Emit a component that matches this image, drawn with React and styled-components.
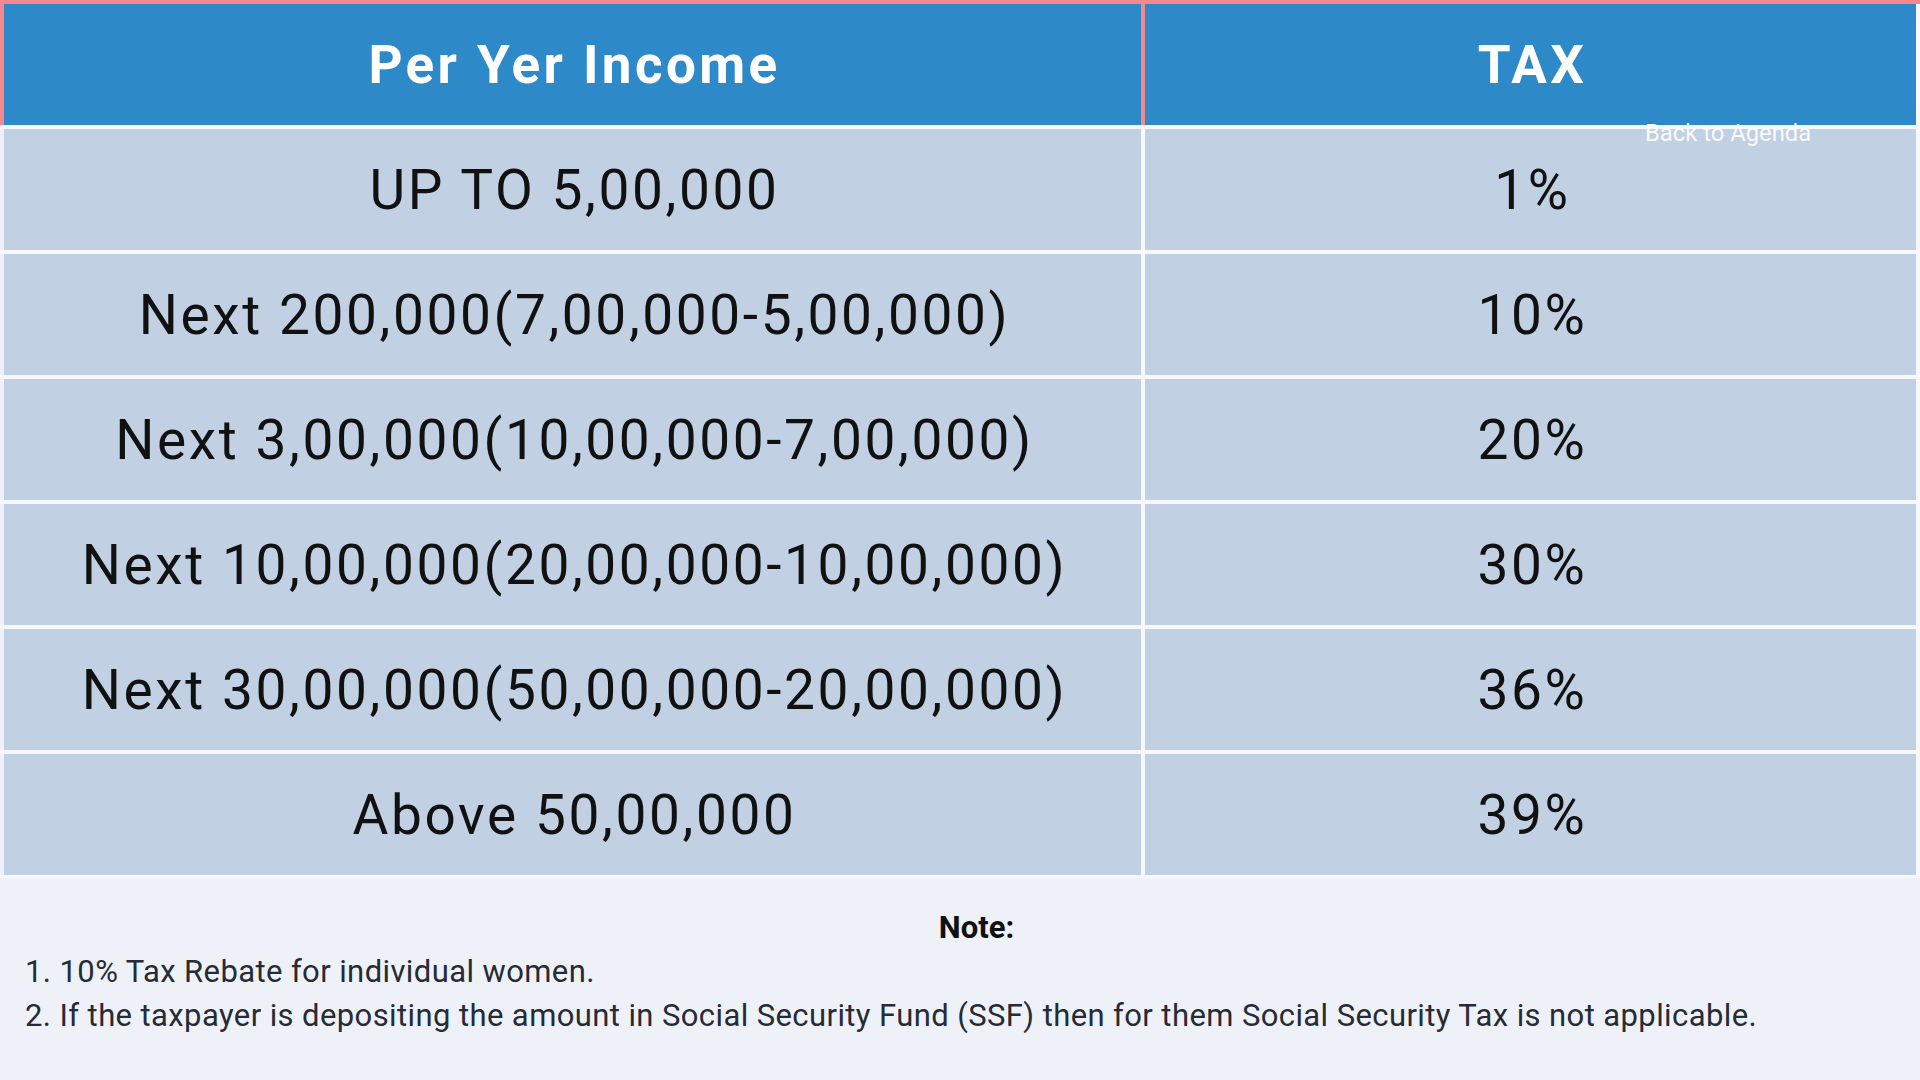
import React from 'react';
import styled, { createGlobalStyle } from 'styled-components';

const GlobalStyle = createGlobalStyle`
  html, body {
    margin: 0;
    padding: 0;
    background: #eef2f8;
  }
  * {
    box-sizing: border-box;
  }
`

const Page = styled.div`
  position: relative;
  width: 1920px;
  height: 1080px;
  overflow: hidden;
  background: #eef2f8;
  border-top: 4px solid #f4898d;
  font-family: Roboto, "Liberation Sans", sans-serif;
`

const Table = styled.div`
  display: flex;
  flex-direction: column;
  gap: 4px;
  padding-right: 4px;
  padding-bottom: 3px;
  background: #f6f8fb;
`

const Row = styled.div`
  display: grid;
  grid-template-columns: 1137px 4px 1fr;
  height: 121px;
  border-left: 4px solid ${(props) => (props.$head ? '#f4898d' : '#eef2f8')};
  background: ${(props) => (props.$head ? '#2e89c9' : '#c1d0e3')};
`

const Divider = styled.div`
  background: ${(props) => (props.$head ? '#f4898d' : '#f6f8fb')};
`

// padding-left balances the trailing letter-spacing so text sits centred
const Cell = styled.div`
  display: flex;
  align-items: center;
  justify-content: center;
  padding-left: ${(props) => (props.$head ? '4px' : '4px')};
  color: ${(props) => (props.$head ? '#ffffff' : '#111111')};
  font-size: ${(props) => (props.$head ? '53px' : '55px')};
  font-weight: ${(props) => (props.$head ? 700 : 400)};
  letter-spacing: ${(props) => (props.$head ? '3.4px' : '2.6px')};
  white-space: nowrap;
`

const BackLink = styled.a`
  position: absolute;
  left: 1645px;
  top: 117px;
  font-size: 23.8px;
  line-height: 24px;
  color: rgba(255, 255, 255, 0.92);
  text-decoration: none;
`

const Notes = styled.div`
  padding: 28px 24px 0 25px;
  line-height: 44px;
`

const NoteTitle = styled.div`
  text-align: center;
  padding-left: 32px;
  font-size: 31px;
  font-weight: 700;
  color: #111111;
`

const NoteLine = styled.div`
  font-size: 31px;
  letter-spacing: 0.4px;
  color: #262b36;
  white-space: nowrap;
`

const rows = [
  ['UP TO 5,00,000', '1%'],
  ['Next 200,000(7,00,000-5,00,000)', '10%'],
  ['Next 3,00,000(10,00,000-7,00,000)', '20%'],
  ['Next 10,00,000(20,00,000-10,00,000)', '30%'],
  ['Next 30,00,000(50,00,000-20,00,000)', '36%'],
  ['Above 50,00,000', '39%'],
]

const App = () => {
  return (
    <Page>
      <GlobalStyle />
      <Table>
        <Row $head>
          <Cell $head>Per Yer Income</Cell>
          <Divider $head />
          <Cell $head>TAX</Cell>
        </Row>
        {rows.map((item) => {
          return (
            <Row key={`tax_row_${item[1]}`}>
              <Cell>{item[0]}</Cell>
              <Divider />
              <Cell>{item[1]}</Cell>
            </Row>
          )
        })}
      </Table>
      <Notes>
        <NoteTitle>Note:</NoteTitle>
        <NoteLine>1. 10% Tax Rebate for individual women.</NoteLine>
        <NoteLine>2. If the taxpayer is depositing the amount in Social Security Fund (SSF) then for them Social Security Tax is not applicable.</NoteLine>
      </Notes>
      <BackLink href="#agenda">Back to Agenda</BackLink>
    </Page>
  )
}

export default App
